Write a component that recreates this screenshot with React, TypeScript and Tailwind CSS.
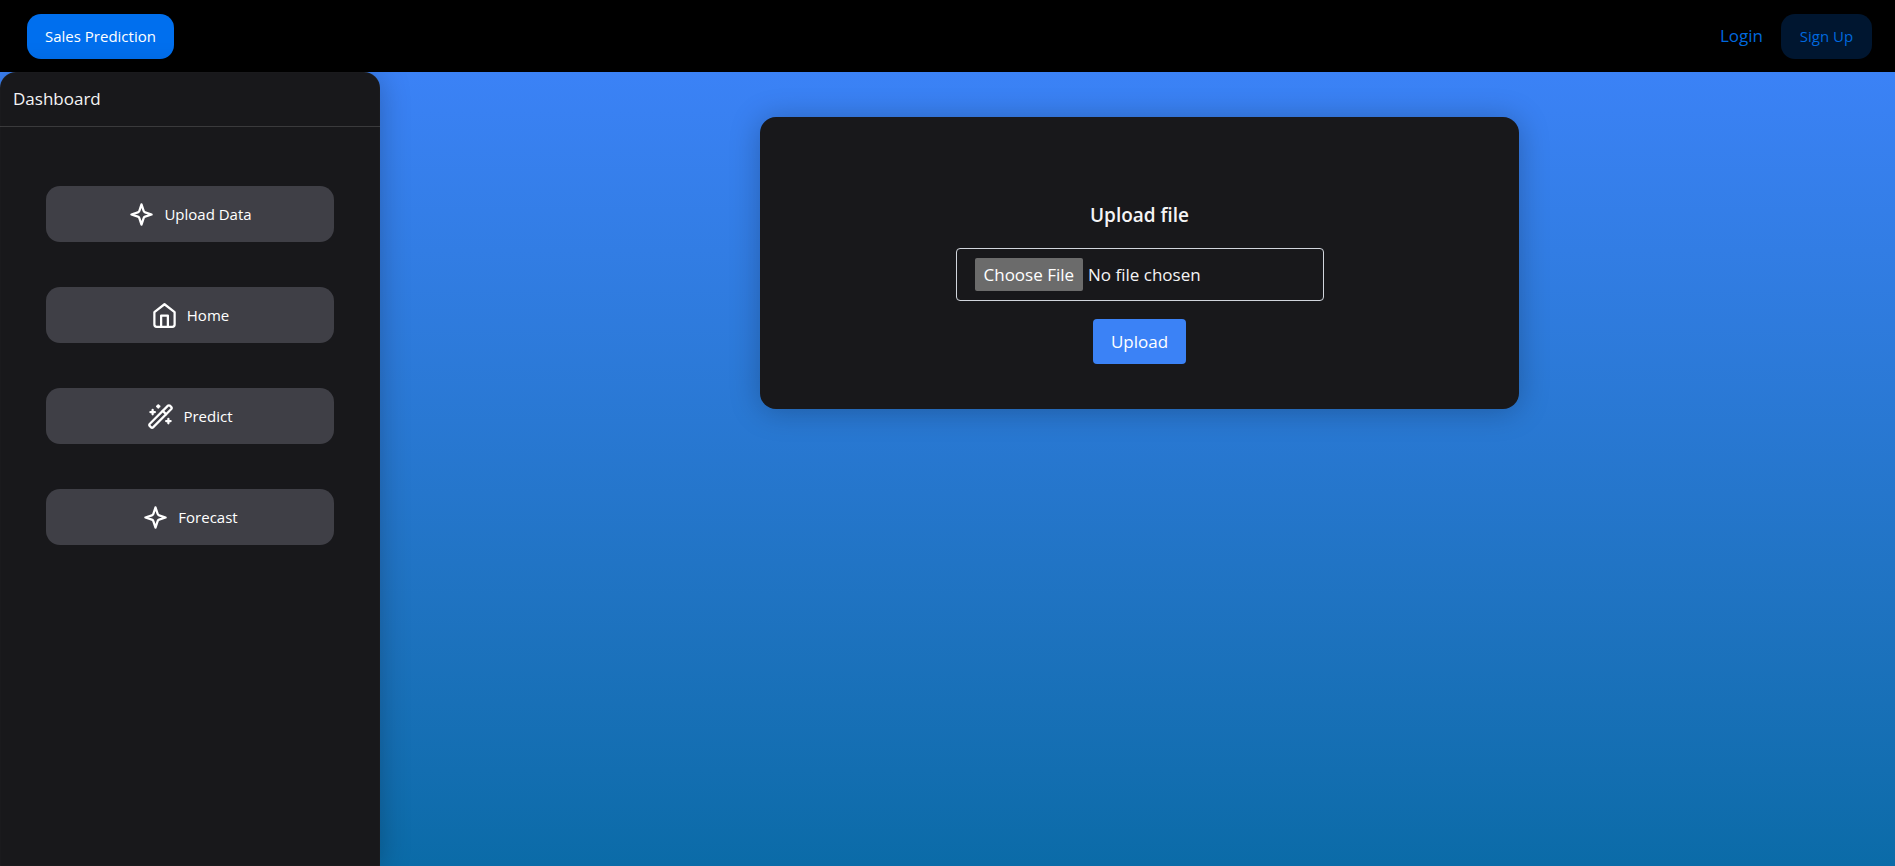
import React, { type ReactNode } from "react";
import { WandSparkles } from "lucide-react";

function LineIcon({ children }: { children: ReactNode }) {
  return (
    <svg
      viewBox="0 0 24 24"
      fill="none"
      stroke="currentColor"
      strokeWidth={2}
      strokeLinecap="round"
      strokeLinejoin="round"
      aria-hidden="true"
      className="size-[27px] shrink-0"
    >
      {children}
    </svg>
  );
}

function SparkleIcon() {
  return (
    <LineIcon>
      <path d="m12 3-1.9 5.8a2 2 0 0 1-1.287 1.288L3 12l5.8 1.9a2 2 0 0 1 1.288 1.287L12 21l1.9-5.8a2 2 0 0 1 1.287-1.288L21 12l-5.8-1.9a2 2 0 0 1-1.288-1.287Z" />
    </LineIcon>
  );
}

function HomeIcon() {
  return (
    <LineIcon>
      <path d="m3 9 9-7 9 7v11a2 2 0 0 1-2 2H5a2 2 0 0 1-2-2z" />
      <polyline points="9 22 9 12 15 12 15 22" />
    </LineIcon>
  );
}

const navItems: { label: string; icon: ReactNode }[] = [
  { label: "Upload Data", icon: <SparkleIcon /> },
  { label: "Home", icon: <HomeIcon /> },
  { label: "Predict", icon: <WandSparkles className="size-[27px] shrink-0" aria-hidden="true" /> },
  { label: "Forecast", icon: <SparkleIcon /> },
];

function Header() {
  return (
    <header className="flex h-[72px] shrink-0 items-center justify-between bg-black pr-[23px] pl-[27px]">
      <button type="button" className="h-[45px] rounded-[14px] bg-[#006fee] px-[18px] text-[15px] text-white">
        Sales Prediction
      </button>
      <nav className="flex items-center gap-[18px]">
        <a href="#login" className="text-[17px] text-[#0068de]">
          Login
        </a>
        <a
          href="#signup"
          className="flex h-[45px] min-w-[91px] items-center justify-center rounded-[14px] bg-[#001630] px-[18px] text-[15px] text-[#0068de]"
        >
          Sign Up
        </a>
      </nav>
    </header>
  );
}

function Sidebar() {
  return (
    <aside className="w-1/5 min-w-[380px] shrink-0 rounded-t-2xl bg-[#18181b] shadow-[0_2px_30px_rgba(0,0,0,0.25),inset_0_0_1px_rgba(255,255,255,0.15)]">
      <h1 className="border-b border-white/15 px-[13px] py-[14px] text-[17px] leading-[26px] text-zinc-100">
        Dashboard
      </h1>
      <nav className="flex flex-col gap-[45px] px-[46px] pt-[59px]">
        {navItems.map(({ label, icon }) => (
          <button
            key={label}
            type="button"
            className="flex h-14 items-center justify-center gap-[9px] rounded-[14px] bg-[#3f3f46] text-[15px] text-white"
          >
            {icon}
            {label}
          </button>
        ))}
      </nav>
    </aside>
  );
}

function UploadCard() {
  return (
    <form
      className="flex w-[759px] max-w-full flex-col items-center rounded-2xl bg-[#18181b] px-[45px] pt-[84px] pb-[45px] shadow-[0_2px_30px_rgba(0,0,0,0.25)]"
      onSubmit={(e) => e.preventDefault()}
    >
      <label htmlFor="file" className="text-[19px] leading-[29px] font-semibold text-zinc-100">
        Upload file
      </label>
      <input
        id="file"
        type="file"
        className="mt-[18px] h-[53px] w-[368px] max-w-full rounded-sm border border-gray-300 px-[18px] py-[9px] text-[17px] leading-[33px] text-zinc-100 file:mr-[5px] file:h-[33px] file:rounded-xs file:bg-[#6b6b6b] file:px-[9px] file:text-white"
      />
      <button type="submit" className="mt-[18px] h-[45px] rounded-sm bg-[#3b82f6] px-[18px] text-[17px] text-white">
        Upload
      </button>
    </form>
  );
}

export default function App() {
  return (
    <div className="flex min-h-screen flex-col font-['Open_Sans','Noto_Sans',sans-serif]">
      <Header />
      <div className="flex flex-1 bg-linear-to-b from-[#3b82f6] to-[#0369a1] to-109%">
        <Sidebar />
        <main className="flex flex-1 items-start justify-center pt-[45px] pl-1">
          <UploadCard />
        </main>
      </div>
    </div>
  );
}
